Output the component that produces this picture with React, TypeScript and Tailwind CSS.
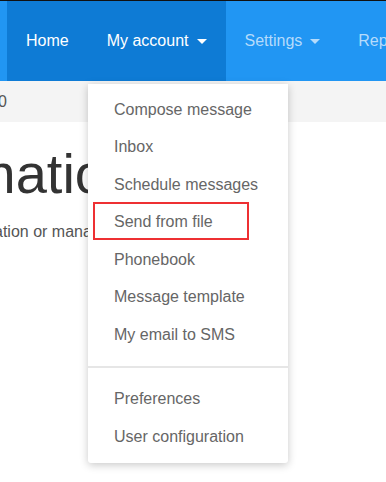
import { useState } from 'react'

const menuTop = [
  'Compose message',
  'Inbox',
  'Schedule messages',
  'Send from file',
  'Phonebook',
  'Message template',
  'My email to SMS',
]

const menuBottom = ['Preferences', 'User configuration']

function Caret({ light }: { light?: boolean }) {
  return (
    <span
      className={`ml-[8px] inline-block h-0 w-0 border-x-[5px] border-t-[5px] border-x-transparent ${
        light ? 'border-t-[#b5dbfb]' : 'border-t-white'
      }`}
    />
  )
}

export default function App() {
  const [open] = useState(true)

  return (
    <div className="relative h-[482px] w-[386px] overflow-hidden bg-white font-['Liberation_Sans',Arial,sans-serif]">
      <div className="h-px bg-[#111]" />
      <nav className="flex h-[80px] whitespace-nowrap bg-[#2196f3] pl-[7px] text-[16px]">
        <div className="flex shrink-0 bg-[#0e7bd5]">
          <a className="flex items-center px-[19px] text-white">Home</a>
          <a className="flex items-center pl-[19px] pr-[19px] text-white">
            My account
            <Caret />
          </a>
        </div>
        <a className="flex shrink-0 items-center px-[19px] text-[#b5dbfb]">
          Settings
          <Caret light />
        </a>
        <a className="flex shrink-0 items-center px-[19px] text-[#b5dbfb]">Reports</a>
      </nav>

      <div className="flex h-[41px] items-center whitespace-nowrap bg-[#f4f4f4] text-[16px] text-[#555]">
        <span className="-ml-[2px]">0</span>
      </div>

      <div className="whitespace-nowrap">
        <h1 className="-ml-[143px] mt-[12px] text-[56px] font-normal leading-[80px] text-[#333]">
          Information
        </h1>
        <p className="-ml-[6px] mt-[6px] text-[16px] text-[#555]">ation or manage your account</p>
      </div>

      {open && (
        <div className="absolute left-[88px] top-[84px] w-[200px] rounded-b-[3px] bg-white pb-[7px] pt-[7px] text-[16px] text-[#666] shadow-[0_2px_8px_rgba(0,0,0,0.22)]">
          {menuTop.map((item) => (
            <div key={item} className="relative flex h-[37.5px] items-center px-[26px]">
              {item}
              {item === 'Send from file' && (
                <span className="absolute left-[5px] top-[-2px] h-[38px] w-[156px] border-2 border-[#ee3033]" />
              )}
            </div>
          ))}
          <div className="mb-[13px] mt-[12px] h-[2px] bg-[#e6e6e6]" />
          {menuBottom.map((item) => (
            <div key={item} className="flex h-[37.5px] items-center px-[26px]">
              {item}
            </div>
          ))}
        </div>
      )}
    </div>
  )
}
